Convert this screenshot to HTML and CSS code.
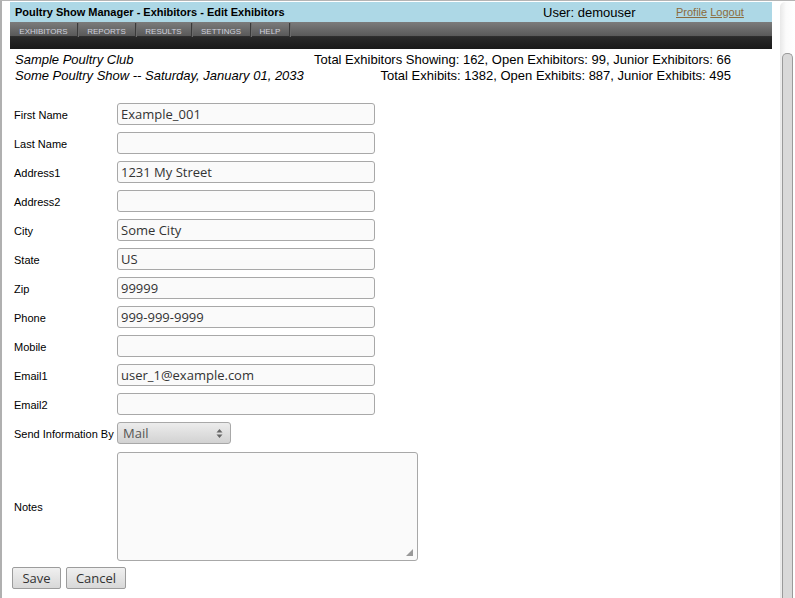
FILE: index.html
```
<!DOCTYPE html>
<html>
<head>
<meta charset="utf-8">
<link rel="stylesheet" href="styles.css">
</head>
<body>
<div class="window">
  <div class="page">
    <div class="header">
      <div class="title">Poultry Show Manager - Exhibitors - Edit Exhibitors</div>
      <div class="user">User: demouser</div>
      <div class="links"><a href="#">Profile</a> <a href="#">Logout</a></div>
    </div>
    <div class="nav">
      <div class="menu">
        <a class="item exhibitors" href="#">EXHIBITORS</a>
        <a class="item reports" href="#">REPORTS</a>
        <a class="item results" href="#">RESULTS</a>
        <a class="item settings" href="#">SETTINGS</a>
        <a class="item help" href="#">HELP</a>
      </div>
    </div>
    <div class="info">
      <div class="show">
        <div>Sample Poultry Club</div>
        <div>Some Poultry Show -- Saturday, January 01, 2033</div>
      </div>
      <div class="stats">
        <div>Total Exhibitors Showing: 162, Open Exhibitors: 99, Junior Exhibitors: 66</div>
        <div>Total Exhibits: 1382, Open Exhibits: 887, Junior Exhibits: 495</div>
      </div>
    </div>
    <form class="form">
      <label class="lbl">First Name</label><input class="field" type="text" value="Example_001">
      <label class="lbl">Last Name</label><input class="field" type="text" value="">
      <label class="lbl">Address1</label><input class="field" type="text" value="1231 My Street">
      <label class="lbl">Address2</label><input class="field" type="text" value="">
      <label class="lbl">City</label><input class="field" type="text" value="Some City">
      <label class="lbl">State</label><input class="field" type="text" value="US">
      <label class="lbl">Zip</label><input class="field" type="text" value="99999">
      <label class="lbl">Phone</label><input class="field" type="text" value="999-999-9999">
      <label class="lbl">Mobile</label><input class="field" type="text" value="">
      <label class="lbl">Email1</label><input class="field" type="text" value="user_1@example.com">
      <label class="lbl">Email2</label><input class="field" type="text" value="">
      <label class="lbl">Send Information By</label>
      <div class="select"><span>Mail</span>
        <svg class="arrows" width="7" height="11" viewBox="0 0 7 11"><path d="M3.5 1 L6.5 4.5 L0.5 4.5 Z M3.5 10 L6.5 6.5 L0.5 6.5 Z" fill="#666"/></svg>
      </div>
      <label class="lbl">Notes</label>
      <div class="notes">
        <svg class="grip" width="7" height="7" viewBox="0 0 7 7"><path d="M7 0 L7 7 L0 7 Z" fill="#999"/></svg>
      </div>
      <div class="buttons">
        <button type="button" class="btn save">Save</button>
        <button type="button" class="btn cancel">Cancel</button>
      </div>
    </form>
  </div>
  <div class="scrollbar"><div class="thumb"></div></div>
</div>
</body>
</html>
```
FILE: styles.css
```
html, body {
  margin: 0;
  padding: 0;
  height: 100%;
  overflow: hidden;
  background: #ffffff;
}
.window {
  display: flex;
  height: 598px;
  border-top: 1px solid #b4b4b4;
  box-sizing: border-box;
}
.page {
  width: 780px;
  border-left: 2px solid #b0b0b0;
  padding: 1px 8px 0 8px;
  box-sizing: border-box;
  font-family: "Liberation Sans", Arial, sans-serif;
  color: #000;
}
.header {
  background: #add8e6;
  height: 20px;
  display: flex;
  align-items: center;
  font-size: 13px;
}
.title {
  font-weight: bold;
  font-size: 11px;
  padding-left: 5px;
  width: 528px;
}
.user {
  width: 133px;
}
.links {
  font-size: 11px;
}
.links a {
  color: #8b6b3d;
  text-decoration: underline;
}
.nav {
  height: 27px;
  background: linear-gradient(to bottom, #7c7c7c 0%, #5a5a5a 50%, #2a2a2a 54%, #1a1a1a 100%);
}
.menu {
  display: flex;
  height: 14px;
}
.item {
  display: block;
  height: 14px;
  line-height: 17px;
  box-sizing: border-box;
  text-align: center;
  font-size: 8px;
  color: #d0d2de;
  text-decoration: none;
  border-right: 1px solid #3a3a3a;
  box-shadow: 1px 0 0 #6a6a6a;
  margin-top: 1px;
}
.exhibitors { width: 68px; }
.reports { width: 58px; }
.results { width: 56px; }
.settings { width: 59px; }
.help { width: 39px; }
.info {
  display: flex;
  justify-content: space-between;
  font-size: 13px;
  line-height: 16px;
  padding: 3px 41px 0 5px;
}
.show {
  font-style: italic;
}
.stats {
  text-align: right;
}
.form {
  display: grid;
  grid-template-columns: 105px auto;
  row-gap: 7px;
  align-items: center;
  justify-items: start;
  margin-top: 19px;
  padding-left: 2px;
}
.lbl {
  font-size: 11px;
  padding-left: 2px;
  padding-top: 1px;
}
.field {
  width: 258px;
  height: 22px;
  box-sizing: border-box;
  border: 1px solid #a8a8a8;
  border-radius: 3px;
  background: #fafafa;
  font-family: "Open Sans", "Noto Sans", sans-serif;
  font-size: 13px;
  color: #333;
  padding: 0 3px;
  margin: 0;
  outline: none;
}
.select {
  width: 114px;
  height: 22px;
  box-sizing: border-box;
  border: 1px solid #a8a8a8;
  border-radius: 3px;
  background: linear-gradient(to bottom, #ececec, #d2d2d2);
  font-family: "Open Sans", "Noto Sans", sans-serif;
  font-size: 13px;
  color: #555;
  display: flex;
  align-items: center;
  justify-content: space-between;
  padding: 0 7px 0 5px;
}
.notes {
  width: 301px;
  height: 109px;
  box-sizing: border-box;
  border: 1px solid #a8a8a8;
  border-radius: 3px;
  background: #fafafa;
  display: flex;
  align-items: flex-end;
  justify-content: flex-end;
  padding: 0 4px 4px 0;
  margin-top: 1px;
}
.buttons {
  grid-column: 1 / 3;
  display: flex;
  gap: 5px;
  margin-top: -1px;
}
.btn {
  height: 22px;
  border: 1px solid #9c9c9c;
  border-radius: 2px;
  background: linear-gradient(to bottom, #f0f0f0, #d8d8d8);
  font-family: "Open Sans", "Noto Sans", sans-serif;
  font-size: 13px;
  color: #333;
  padding: 0;
  margin: 0;
}
.save { width: 49px; }
.cancel { width: 60px; }
.scrollbar {
  width: 15px;
  margin-top: 1px;
  border-radius: 5px 5px 0 0;
  background: linear-gradient(to right, #e8e8e8, #fbfbfb 40%, #ffffff);
  display: flex;
  flex-direction: column;
  padding-top: 51px;
  box-sizing: border-box;
}
.thumb {
  flex: 1;
  margin: 0 2px 0 2px;
  background: #d9d9d9;
  border: 1px solid #9a9a9a;
  border-bottom: none;
  border-radius: 5px 5px 0 0;
}
```
